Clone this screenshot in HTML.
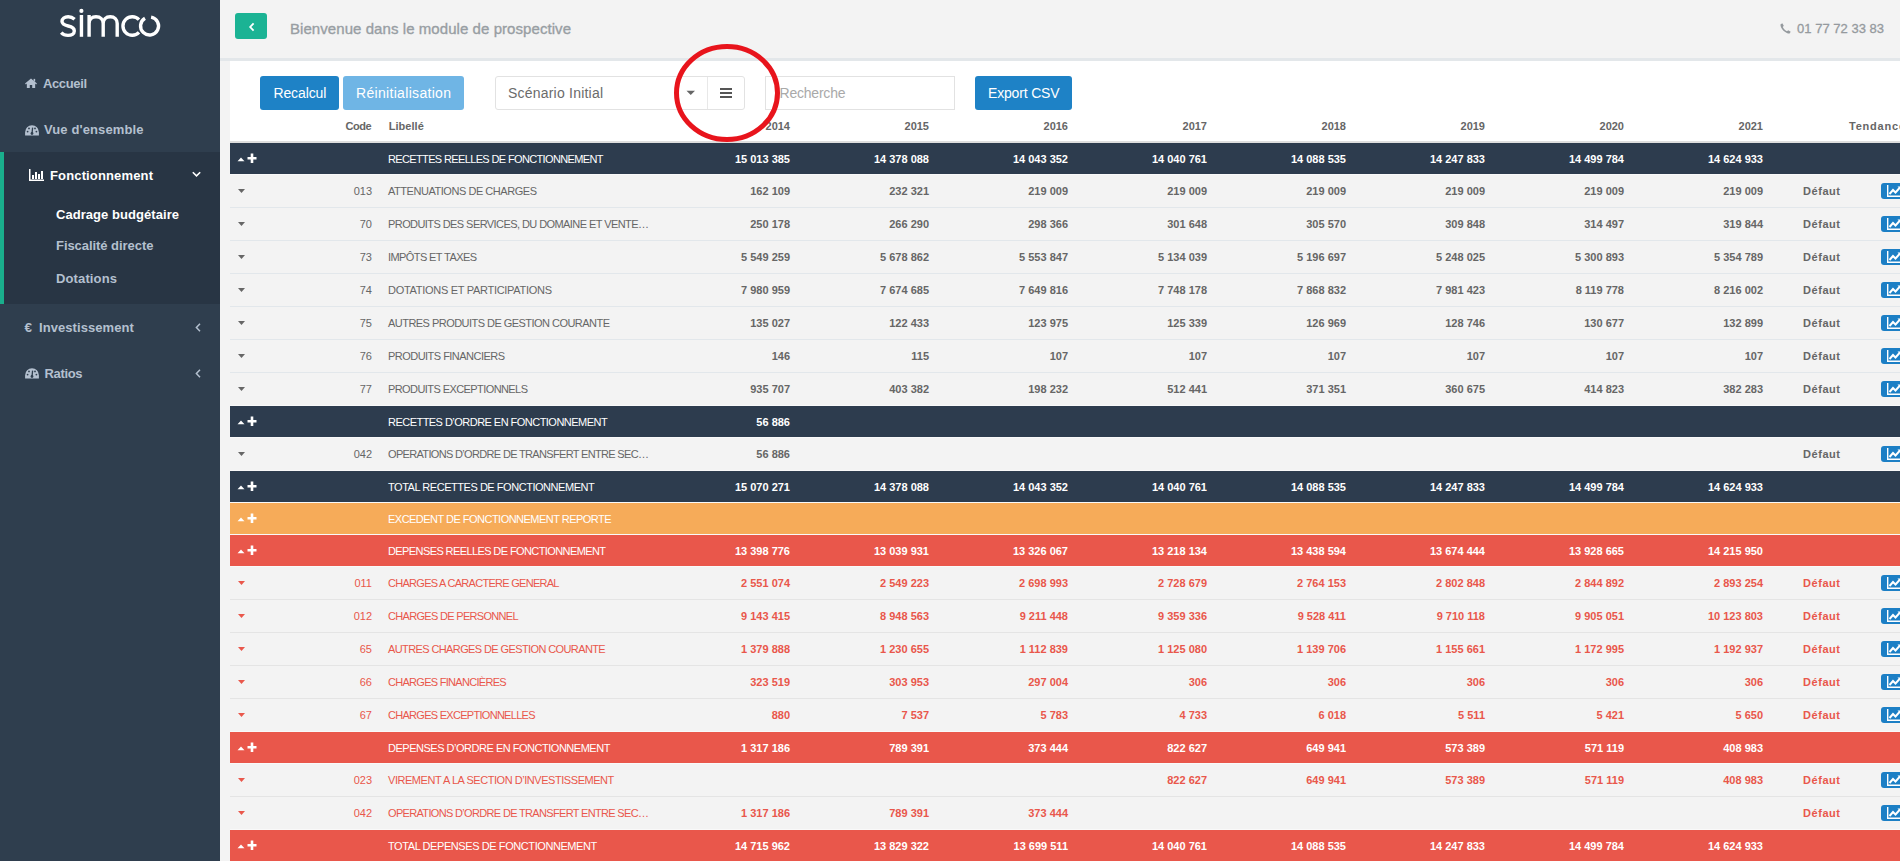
<!DOCTYPE html><html><head><meta charset="utf-8"><style>
*{margin:0;padding:0;box-sizing:border-box}
html,body{width:1900px;height:861px;overflow:hidden;background:#f3f3f3;font-family:"Liberation Sans", sans-serif}
.a{position:absolute}
.t{position:absolute;white-space:pre;line-height:1}
#side{position:absolute;left:0;top:0;width:220px;height:861px;background:#2f3e4e}
#act{position:absolute;left:0;top:152px;width:220px;height:152px;background:#283544}
#actbar{position:absolute;left:0;top:152px;width:4px;height:152px;background:#1aae8c}
.row{position:absolute;left:230px;width:1670px}
.dark{background:#2d3c4e;color:#fff}
.orange{background:#f6ab59;color:#fff}
.red{background:#e9574b;color:#fff}
.light{background:#f3f3f3;color:#666}
.lred{background:#f3f3f3;color:#e9574b}
.num{position:absolute;font-size:11px;font-weight:700;white-space:pre;text-align:right;width:120px}
.lab{position:absolute;left:158px;font-size:11px;white-space:pre}
.cd{position:absolute;font-size:11px;white-space:pre;text-align:right;width:60px;left:82px}
.df{position:absolute;left:1573px;font-size:11px;font-weight:700;white-space:pre}
.cb{position:absolute;left:1651px;width:30px;height:16px;background:#1c7fc5;border-radius:3px}
</style></head><body>
<div class="a" style="left:220px;top:58px;width:1680px;height:3px;background:#e3e7ea"></div>
<div class="a" style="left:230px;top:61px;width:1670px;height:800px;background:#fff"></div>
<div id="side"></div><div id="act"></div><div id="actbar"></div>
<svg class="a" style="left:0;top:0" width="220" height="45" viewBox="0 0 220 45"><g stroke="#fff" stroke-width="3.4" fill="none"><path d="M74.6 19.2 C72.6 17.4 70.6 16.7 68.2 16.7 C64.5 16.7 62 18.7 62 21.3 C62 24.3 65 25.3 68.2 26 C71.5 26.7 74.3 27.8 74.3 31 C74.3 33.8 71.6 35.4 68 35.4 C65.3 35.4 63 34.5 61.2 32.6"/><path d="M81.45 15 L81.45 36.8"/><path d="M89.1 15 L89.1 36.8 M89.1 23.5 C89.1 19 92 16.7 96 16.7 C100.5 16.7 103.2 19.5 103.2 23.5 L103.2 36.8 M103.2 23.5 C103.2 19.5 105.9 16.7 110.2 16.7 C114.6 16.7 117.2 19.5 117.2 23.5 L117.2 36.8"/><path d="M139 19.6 A9.3 9.3 0 1 0 139 32.4"/><path d="M151.1 17.1 A9 9 0 1 1 145 18.2"/></g><circle cx="81.4" cy="10.9" r="2.1" fill="#fff"/></svg>
<span class="t" style="left:43px;top:76.5px;font-size:13px;font-weight:700;letter-spacing:-0.375px;color:#b4c0cf">Accueil</span>
<span class="t" style="left:44px;top:123.3px;font-size:13px;font-weight:700;letter-spacing:0.117px;color:#b4c0cf">Vue d'ensemble</span>
<span class="t" style="left:50px;top:168.9px;font-size:13px;font-weight:700;letter-spacing:0.145px;color:#fff">Fonctionnement</span>
<span class="t" style="left:56px;top:207.7px;font-size:13px;font-weight:700;letter-spacing:0.053px;color:#fff">Cadrage budgétaire</span>
<span class="t" style="left:56px;top:239.3px;font-size:13px;font-weight:700;letter-spacing:-0.055px;color:#b4c0cf">Fiscalité directe</span>
<span class="t" style="left:56px;top:271.6px;font-size:13px;font-weight:700;letter-spacing:0.131px;color:#b4c0cf">Dotations</span>
<span class="t" style="left:39px;top:320.6px;font-size:13px;font-weight:700;letter-spacing:0.066px;color:#b4c0cf">Investissement</span>
<span class="t" style="left:44.5px;top:367.0px;font-size:13px;font-weight:700;letter-spacing:-0.347px;color:#b4c0cf">Ratios</span>
<svg class="a" style="left:25px;top:78px" width="12" height="10.5" viewBox="0 0 13 12" preserveAspectRatio="none"><path d="M6.5 0.5 L0 6.3 L1 7.3 L2 6.4 L2 11.5 L5.2 11.5 L5.2 8 L7.8 8 L7.8 11.5 L11 11.5 L11 6.4 L12 7.3 L13 6.3 Z" fill="#b4c0cf"/><rect x="9.3" y="1" width="1.7" height="3" fill="#b4c0cf"/></svg>
<svg class="a" style="left:24.5px;top:124.5px" width="14" height="11" viewBox="0 0 14 11"><path d="M7 0.3 A6.9 6.9 0 0 0 0.1 7.2 L0.1 10.6 L13.9 10.6 L13.9 7.2 A6.9 6.9 0 0 0 7 0.3 Z" fill="#b4c0cf"/><path d="M7 8.6 L7.6 2.6" stroke="#2f3e4e" stroke-width="1.3"/><circle cx="7" cy="8.5" r="1.4" fill="#2f3e4e"/><circle cx="2.6" cy="6.6" r="0.9" fill="#2f3e4e"/><circle cx="4" cy="3.4" r="0.9" fill="#2f3e4e"/><circle cx="10" cy="3.4" r="0.9" fill="#2f3e4e"/><circle cx="11.4" cy="6.6" r="0.9" fill="#2f3e4e"/></svg>
<svg class="a" style="left:24.5px;top:368px" width="14" height="11" viewBox="0 0 14 11"><path d="M7 0.3 A6.9 6.9 0 0 0 0.1 7.2 L0.1 10.6 L13.9 10.6 L13.9 7.2 A6.9 6.9 0 0 0 7 0.3 Z" fill="#b4c0cf"/><path d="M7 8.6 L7.6 2.6" stroke="#2f3e4e" stroke-width="1.3"/><circle cx="7" cy="8.5" r="1.4" fill="#2f3e4e"/><circle cx="2.6" cy="6.6" r="0.9" fill="#2f3e4e"/><circle cx="4" cy="3.4" r="0.9" fill="#2f3e4e"/><circle cx="10" cy="3.4" r="0.9" fill="#2f3e4e"/><circle cx="11.4" cy="6.6" r="0.9" fill="#2f3e4e"/></svg>
<svg class="a" style="left:29px;top:169px" width="15" height="12" viewBox="0 0 15 12"><path d="M0.75 0 L0.75 11.25 L15 11.25" stroke="#fff" stroke-width="1.5" fill="none"/><rect x="3" y="6" width="2" height="4" fill="#fff"/><rect x="6" y="3" width="2" height="7" fill="#fff"/><rect x="9" y="5" width="2" height="5" fill="#fff"/><rect x="12" y="2" width="2" height="8" fill="#fff"/></svg>
<span class="t" style="left:24.5px;top:321px;font-size:13.5px;font-weight:700;color:#b4c0cf">€</span>
<svg class="a" style="left:192px;top:171px" width="9" height="7" viewBox="0 0 9 7"><path d="M0.8 1.2 L4.5 4.9 L8.2 1.2" stroke="#fff" stroke-width="1.6" fill="none"/></svg>
<svg class="a" style="left:195px;top:323px" width="6" height="9" viewBox="0 0 6 9"><path d="M5 0.8 L1.4 4.5 L5 8.2" stroke="#b4c0cf" stroke-width="1.5" fill="none"/></svg>
<svg class="a" style="left:195px;top:369px" width="6" height="9" viewBox="0 0 6 9"><path d="M5 0.8 L1.4 4.5 L5 8.2" stroke="#b4c0cf" stroke-width="1.5" fill="none"/></svg>
<div class="a" style="left:235px;top:13px;width:32px;height:26px;background:#1bb394;border-radius:3px"></div>
<svg class="a" style="left:247.5px;top:22px" width="8" height="10" viewBox="0 0 8 10"><path d="M5.6 1.3 L2.2 5 L5.6 8.7" stroke="#fff" stroke-width="1.8" fill="none"/></svg>
<span class="t" style="left:290px;top:21.2px;font-size:15px;font-weight:400;letter-spacing:0.065px;-webkit-text-stroke:0.35px #989ea3;color:#989ea3">Bienvenue dans le module de prospective</span>
<span class="t" style="left:1797px;top:21.5px;font-size:13px;font-weight:400;letter-spacing:0.019px;-webkit-text-stroke:0.3px #959a9e;color:#959a9e">01 77 72 33 83</span>
<svg class="a" style="left:1780px;top:23px" width="11" height="11" viewBox="0 0 11 11"><path d="M2.3 0.3 L3.8 2.8 L2.8 4 C3.5 5.6 5.2 7.4 7 8.2 L8.2 7.2 L10.7 8.7 L9.6 10.6 C5.5 10.6 0.4 5.5 0.4 1.4 Z" fill="#959a9e"/></svg>
<div class="a" style="left:260px;top:76px;width:79px;height:34px;background:#1e82c6;border-radius:3px"></div>
<span class="t" style="left:273.4px;top:86.1px;font-size:14px;font-weight:400;letter-spacing:-0.100px;color:#fff">Recalcul</span>
<div class="a" style="left:343px;top:76px;width:121px;height:34px;background:#6fb5e5;border-radius:3px"></div>
<span class="t" style="left:356px;top:86.1px;font-size:14px;font-weight:400;letter-spacing:0.315px;color:#fff">Réinitialisation</span>
<div class="a" style="left:495px;top:76px;width:250px;height:34px;border:1px solid #e2e2e2;border-radius:3px;background:#fff"></div>
<div class="a" style="left:707px;top:77px;width:1px;height:32px;background:#e8e8e8"></div>
<span class="t" style="left:508px;top:85.8px;font-size:14px;font-weight:400;letter-spacing:0.211px;color:#6b6b6b">Scénario Initial</span>
<svg class="a" style="left:686px;top:90px" width="10" height="6" viewBox="0 0 10 6"><path d="M0.5 0.8 L9 0.8 L4.75 5 Z" fill="#666"/></svg>
<div class="a" style="left:720px;top:88px;width:12px;height:2px;background:#555"></div>
<div class="a" style="left:720px;top:92px;width:12px;height:2px;background:#555"></div>
<div class="a" style="left:720px;top:96px;width:12px;height:2px;background:#555"></div>
<div class="a" style="left:765px;top:76px;width:190px;height:34px;border:1px solid #e2e2e2;background:#fff"></div>
<span class="t" style="left:779.5px;top:85.8px;font-size:14px;font-weight:400;letter-spacing:-0.213px;color:#a9a9a9">Recherche</span>
<div class="a" style="left:975px;top:76px;width:97px;height:34px;background:#1e82c6;border-radius:3px"></div>
<span class="t" style="left:988px;top:86.1px;font-size:14px;font-weight:400;letter-spacing:-0.171px;color:#fff">Export CSV</span>
<span class="t" style="left:345.4px;top:120.7px;font-size:11px;font-weight:700;letter-spacing:-0.400px;color:#666">Code</span>
<span class="t" style="left:388.8px;top:120.7px;font-size:11px;font-weight:700;letter-spacing:0.026px;color:#666">Libellé</span>
<span class="t" style="left:670px;width:120px;text-align:right;top:120.7px;font-size:11px;font-weight:700;color:#666">2014</span>
<span class="t" style="left:809px;width:120px;text-align:right;top:120.7px;font-size:11px;font-weight:700;color:#666">2015</span>
<span class="t" style="left:948px;width:120px;text-align:right;top:120.7px;font-size:11px;font-weight:700;color:#666">2016</span>
<span class="t" style="left:1087px;width:120px;text-align:right;top:120.7px;font-size:11px;font-weight:700;color:#666">2017</span>
<span class="t" style="left:1226px;width:120px;text-align:right;top:120.7px;font-size:11px;font-weight:700;color:#666">2018</span>
<span class="t" style="left:1365px;width:120px;text-align:right;top:120.7px;font-size:11px;font-weight:700;color:#666">2019</span>
<span class="t" style="left:1504px;width:120px;text-align:right;top:120.7px;font-size:11px;font-weight:700;color:#666">2020</span>
<span class="t" style="left:1643px;width:120px;text-align:right;top:120.7px;font-size:11px;font-weight:700;color:#666">2021</span>
<span class="t" style="left:1849px;top:120.7px;font-size:11px;font-weight:700;letter-spacing:0.781px;color:#666">Tendance</span>
<div class="a" style="left:230px;top:141px;width:1670px;height:2px;background:#dedede"></div>
<div class="row dark" style="top:143px;height:31px;line-height:31px">
<svg class="a" style="left:7px;top:10.0px" width="20" height="11" viewBox="0 0 20 11"><path d="M0.5 8.3 L7.5 8.3 L4 4.4 Z" fill="#fff"/><path d="M15 0.5 L15 10 M10.5 5.25 L19.5 5.25" stroke="#fff" stroke-width="2.6"/></svg>
<span class="lab" style="top:0.5px;letter-spacing:-0.638px">RECETTES REELLES DE FONCTIONNEMENT</span>
<span class="num" style="left:440px;top:0.5px">15 013 385</span>
<span class="num" style="left:579px;top:0.5px">14 378 088</span>
<span class="num" style="left:718px;top:0.5px">14 043 352</span>
<span class="num" style="left:857px;top:0.5px">14 040 761</span>
<span class="num" style="left:996px;top:0.5px">14 088 535</span>
<span class="num" style="left:1135px;top:0.5px">14 247 833</span>
<span class="num" style="left:1274px;top:0.5px">14 499 784</span>
<span class="num" style="left:1413px;top:0.5px">14 624 933</span>
</div>
<div class="a" style="left:230px;top:174px;width:1670px;height:1px;background:#f9f9f9"></div>
<div class="row light" style="top:175px;height:32px;line-height:32px">
<svg class="a" style="left:7.5px;top:14.0px" width="7" height="4" viewBox="0 0 7 4"><path d="M0 0 L7 0 L3.5 4 Z" fill="#666"/></svg>
<span class="cd" style="top:0px">013</span>
<span class="lab" style="top:0px;letter-spacing:-0.460px">ATTENUATIONS DE CHARGES</span>
<span class="num" style="left:440px;top:0px">162 109</span>
<span class="num" style="left:579px;top:0px">232 321</span>
<span class="num" style="left:718px;top:0px">219 009</span>
<span class="num" style="left:857px;top:0px">219 009</span>
<span class="num" style="left:996px;top:0px">219 009</span>
<span class="num" style="left:1135px;top:0px">219 009</span>
<span class="num" style="left:1274px;top:0px">219 009</span>
<span class="num" style="left:1413px;top:0px">219 009</span>
<span class="df" style="letter-spacing:0.553px">Défaut</span>
<div class="cb" style="top:8px"><svg class="a" style="left:6px;top:2px" width="16" height="12" viewBox="0 0 16 12"><path d="M0.7 0 L0.7 11.3 L16 11.3" stroke="#fff" stroke-width="1.4" fill="none"/><path d="M2.5 9 L6 5 L8.5 7.5 L13 2.5" stroke="#fff" stroke-width="2" fill="none"/><path d="M10.5 1.5 L14.5 1.5 L14.5 5.5 Z" fill="#fff"/></svg></div>
</div>
<div class="a" style="left:230px;top:207px;width:1670px;height:1px;background:#e2e7eb"></div>
<div class="row light" style="top:208px;height:32px;line-height:32px">
<svg class="a" style="left:7.5px;top:14.0px" width="7" height="4" viewBox="0 0 7 4"><path d="M0 0 L7 0 L3.5 4 Z" fill="#666"/></svg>
<span class="cd" style="top:0px">70</span>
<span class="lab" style="top:0px;letter-spacing:-0.573px">PRODUITS DES SERVICES, DU DOMAINE ET VENTE…</span>
<span class="num" style="left:440px;top:0px">250 178</span>
<span class="num" style="left:579px;top:0px">266 290</span>
<span class="num" style="left:718px;top:0px">298 366</span>
<span class="num" style="left:857px;top:0px">301 648</span>
<span class="num" style="left:996px;top:0px">305 570</span>
<span class="num" style="left:1135px;top:0px">309 848</span>
<span class="num" style="left:1274px;top:0px">314 497</span>
<span class="num" style="left:1413px;top:0px">319 844</span>
<span class="df" style="letter-spacing:0.553px">Défaut</span>
<div class="cb" style="top:8px"><svg class="a" style="left:6px;top:2px" width="16" height="12" viewBox="0 0 16 12"><path d="M0.7 0 L0.7 11.3 L16 11.3" stroke="#fff" stroke-width="1.4" fill="none"/><path d="M2.5 9 L6 5 L8.5 7.5 L13 2.5" stroke="#fff" stroke-width="2" fill="none"/><path d="M10.5 1.5 L14.5 1.5 L14.5 5.5 Z" fill="#fff"/></svg></div>
</div>
<div class="a" style="left:230px;top:240px;width:1670px;height:1px;background:#e2e7eb"></div>
<div class="row light" style="top:241px;height:32px;line-height:32px">
<svg class="a" style="left:7.5px;top:14.0px" width="7" height="4" viewBox="0 0 7 4"><path d="M0 0 L7 0 L3.5 4 Z" fill="#666"/></svg>
<span class="cd" style="top:0px">73</span>
<span class="lab" style="top:0px;letter-spacing:-0.586px">IMPÔTS ET TAXES</span>
<span class="num" style="left:440px;top:0px">5 549 259</span>
<span class="num" style="left:579px;top:0px">5 678 862</span>
<span class="num" style="left:718px;top:0px">5 553 847</span>
<span class="num" style="left:857px;top:0px">5 134 039</span>
<span class="num" style="left:996px;top:0px">5 196 697</span>
<span class="num" style="left:1135px;top:0px">5 248 025</span>
<span class="num" style="left:1274px;top:0px">5 300 893</span>
<span class="num" style="left:1413px;top:0px">5 354 789</span>
<span class="df" style="letter-spacing:0.553px">Défaut</span>
<div class="cb" style="top:8px"><svg class="a" style="left:6px;top:2px" width="16" height="12" viewBox="0 0 16 12"><path d="M0.7 0 L0.7 11.3 L16 11.3" stroke="#fff" stroke-width="1.4" fill="none"/><path d="M2.5 9 L6 5 L8.5 7.5 L13 2.5" stroke="#fff" stroke-width="2" fill="none"/><path d="M10.5 1.5 L14.5 1.5 L14.5 5.5 Z" fill="#fff"/></svg></div>
</div>
<div class="a" style="left:230px;top:273px;width:1670px;height:1px;background:#e2e7eb"></div>
<div class="row light" style="top:274px;height:32px;line-height:32px">
<svg class="a" style="left:7.5px;top:14.0px" width="7" height="4" viewBox="0 0 7 4"><path d="M0 0 L7 0 L3.5 4 Z" fill="#666"/></svg>
<span class="cd" style="top:0px">74</span>
<span class="lab" style="top:0px;letter-spacing:-0.290px">DOTATIONS ET PARTICIPATIONS</span>
<span class="num" style="left:440px;top:0px">7 980 959</span>
<span class="num" style="left:579px;top:0px">7 674 685</span>
<span class="num" style="left:718px;top:0px">7 649 816</span>
<span class="num" style="left:857px;top:0px">7 748 178</span>
<span class="num" style="left:996px;top:0px">7 868 832</span>
<span class="num" style="left:1135px;top:0px">7 981 423</span>
<span class="num" style="left:1274px;top:0px">8 119 778</span>
<span class="num" style="left:1413px;top:0px">8 216 002</span>
<span class="df" style="letter-spacing:0.553px">Défaut</span>
<div class="cb" style="top:8px"><svg class="a" style="left:6px;top:2px" width="16" height="12" viewBox="0 0 16 12"><path d="M0.7 0 L0.7 11.3 L16 11.3" stroke="#fff" stroke-width="1.4" fill="none"/><path d="M2.5 9 L6 5 L8.5 7.5 L13 2.5" stroke="#fff" stroke-width="2" fill="none"/><path d="M10.5 1.5 L14.5 1.5 L14.5 5.5 Z" fill="#fff"/></svg></div>
</div>
<div class="a" style="left:230px;top:306px;width:1670px;height:1px;background:#e2e7eb"></div>
<div class="row light" style="top:307px;height:32px;line-height:32px">
<svg class="a" style="left:7.5px;top:14.0px" width="7" height="4" viewBox="0 0 7 4"><path d="M0 0 L7 0 L3.5 4 Z" fill="#666"/></svg>
<span class="cd" style="top:0px">75</span>
<span class="lab" style="top:0px;letter-spacing:-0.535px">AUTRES PRODUITS DE GESTION COURANTE</span>
<span class="num" style="left:440px;top:0px">135 027</span>
<span class="num" style="left:579px;top:0px">122 433</span>
<span class="num" style="left:718px;top:0px">123 975</span>
<span class="num" style="left:857px;top:0px">125 339</span>
<span class="num" style="left:996px;top:0px">126 969</span>
<span class="num" style="left:1135px;top:0px">128 746</span>
<span class="num" style="left:1274px;top:0px">130 677</span>
<span class="num" style="left:1413px;top:0px">132 899</span>
<span class="df" style="letter-spacing:0.553px">Défaut</span>
<div class="cb" style="top:8px"><svg class="a" style="left:6px;top:2px" width="16" height="12" viewBox="0 0 16 12"><path d="M0.7 0 L0.7 11.3 L16 11.3" stroke="#fff" stroke-width="1.4" fill="none"/><path d="M2.5 9 L6 5 L8.5 7.5 L13 2.5" stroke="#fff" stroke-width="2" fill="none"/><path d="M10.5 1.5 L14.5 1.5 L14.5 5.5 Z" fill="#fff"/></svg></div>
</div>
<div class="a" style="left:230px;top:339px;width:1670px;height:1px;background:#e2e7eb"></div>
<div class="row light" style="top:340px;height:32px;line-height:32px">
<svg class="a" style="left:7.5px;top:14.0px" width="7" height="4" viewBox="0 0 7 4"><path d="M0 0 L7 0 L3.5 4 Z" fill="#666"/></svg>
<span class="cd" style="top:0px">76</span>
<span class="lab" style="top:0px;letter-spacing:-0.529px">PRODUITS FINANCIERS</span>
<span class="num" style="left:440px;top:0px">146</span>
<span class="num" style="left:579px;top:0px">115</span>
<span class="num" style="left:718px;top:0px">107</span>
<span class="num" style="left:857px;top:0px">107</span>
<span class="num" style="left:996px;top:0px">107</span>
<span class="num" style="left:1135px;top:0px">107</span>
<span class="num" style="left:1274px;top:0px">107</span>
<span class="num" style="left:1413px;top:0px">107</span>
<span class="df" style="letter-spacing:0.553px">Défaut</span>
<div class="cb" style="top:8px"><svg class="a" style="left:6px;top:2px" width="16" height="12" viewBox="0 0 16 12"><path d="M0.7 0 L0.7 11.3 L16 11.3" stroke="#fff" stroke-width="1.4" fill="none"/><path d="M2.5 9 L6 5 L8.5 7.5 L13 2.5" stroke="#fff" stroke-width="2" fill="none"/><path d="M10.5 1.5 L14.5 1.5 L14.5 5.5 Z" fill="#fff"/></svg></div>
</div>
<div class="a" style="left:230px;top:372px;width:1670px;height:1px;background:#e2e7eb"></div>
<div class="row light" style="top:373px;height:32px;line-height:32px">
<svg class="a" style="left:7.5px;top:14.0px" width="7" height="4" viewBox="0 0 7 4"><path d="M0 0 L7 0 L3.5 4 Z" fill="#666"/></svg>
<span class="cd" style="top:0px">77</span>
<span class="lab" style="top:0px;letter-spacing:-0.581px">PRODUITS EXCEPTIONNELS</span>
<span class="num" style="left:440px;top:0px">935 707</span>
<span class="num" style="left:579px;top:0px">403 382</span>
<span class="num" style="left:718px;top:0px">198 232</span>
<span class="num" style="left:857px;top:0px">512 441</span>
<span class="num" style="left:996px;top:0px">371 351</span>
<span class="num" style="left:1135px;top:0px">360 675</span>
<span class="num" style="left:1274px;top:0px">414 823</span>
<span class="num" style="left:1413px;top:0px">382 283</span>
<span class="df" style="letter-spacing:0.553px">Défaut</span>
<div class="cb" style="top:8px"><svg class="a" style="left:6px;top:2px" width="16" height="12" viewBox="0 0 16 12"><path d="M0.7 0 L0.7 11.3 L16 11.3" stroke="#fff" stroke-width="1.4" fill="none"/><path d="M2.5 9 L6 5 L8.5 7.5 L13 2.5" stroke="#fff" stroke-width="2" fill="none"/><path d="M10.5 1.5 L14.5 1.5 L14.5 5.5 Z" fill="#fff"/></svg></div>
</div>
<div class="a" style="left:230px;top:405px;width:1670px;height:1px;background:#f9f9f9"></div>
<div class="row dark" style="top:406px;height:31px;line-height:31px">
<svg class="a" style="left:7px;top:10.0px" width="20" height="11" viewBox="0 0 20 11"><path d="M0.5 8.3 L7.5 8.3 L4 4.4 Z" fill="#fff"/><path d="M15 0.5 L15 10 M10.5 5.25 L19.5 5.25" stroke="#fff" stroke-width="2.6"/></svg>
<span class="lab" style="top:0.5px;letter-spacing:-0.531px">RECETTES D’ORDRE EN FONCTIONNEMENT</span>
<span class="num" style="left:440px;top:0.5px">56 886</span>
</div>
<div class="a" style="left:230px;top:437px;width:1670px;height:1px;background:#f9f9f9"></div>
<div class="row light" style="top:438px;height:32px;line-height:32px">
<svg class="a" style="left:7.5px;top:14.0px" width="7" height="4" viewBox="0 0 7 4"><path d="M0 0 L7 0 L3.5 4 Z" fill="#666"/></svg>
<span class="cd" style="top:0px">042</span>
<span class="lab" style="top:0px;letter-spacing:-0.666px">OPERATIONS D’ORDRE DE TRANSFERT ENTRE SEC…</span>
<span class="num" style="left:440px;top:0px">56 886</span>
<span class="df" style="letter-spacing:0.553px">Défaut</span>
<div class="cb" style="top:8px"><svg class="a" style="left:6px;top:2px" width="16" height="12" viewBox="0 0 16 12"><path d="M0.7 0 L0.7 11.3 L16 11.3" stroke="#fff" stroke-width="1.4" fill="none"/><path d="M2.5 9 L6 5 L8.5 7.5 L13 2.5" stroke="#fff" stroke-width="2" fill="none"/><path d="M10.5 1.5 L14.5 1.5 L14.5 5.5 Z" fill="#fff"/></svg></div>
</div>
<div class="a" style="left:230px;top:470px;width:1670px;height:1px;background:#f9f9f9"></div>
<div class="row dark" style="top:471px;height:31px;line-height:31px">
<svg class="a" style="left:7px;top:10.0px" width="20" height="11" viewBox="0 0 20 11"><path d="M0.5 8.3 L7.5 8.3 L4 4.4 Z" fill="#fff"/><path d="M15 0.5 L15 10 M10.5 5.25 L19.5 5.25" stroke="#fff" stroke-width="2.6"/></svg>
<span class="lab" style="top:0.5px;letter-spacing:-0.462px">TOTAL RECETTES DE FONCTIONNEMENT</span>
<span class="num" style="left:440px;top:0.5px">15 070 271</span>
<span class="num" style="left:579px;top:0.5px">14 378 088</span>
<span class="num" style="left:718px;top:0.5px">14 043 352</span>
<span class="num" style="left:857px;top:0.5px">14 040 761</span>
<span class="num" style="left:996px;top:0.5px">14 088 535</span>
<span class="num" style="left:1135px;top:0.5px">14 247 833</span>
<span class="num" style="left:1274px;top:0.5px">14 499 784</span>
<span class="num" style="left:1413px;top:0.5px">14 624 933</span>
</div>
<div class="a" style="left:230px;top:502px;width:1670px;height:1px;background:#f9f9f9"></div>
<div class="row orange" style="top:503px;height:31px;line-height:31px">
<svg class="a" style="left:7px;top:10.0px" width="20" height="11" viewBox="0 0 20 11"><path d="M0.5 8.3 L7.5 8.3 L4 4.4 Z" fill="#fff"/><path d="M15 0.5 L15 10 M10.5 5.25 L19.5 5.25" stroke="#fff" stroke-width="2.6"/></svg>
<span class="lab" style="top:0.5px;letter-spacing:-0.522px">EXCEDENT DE FONCTIONNEMENT REPORTE</span>
</div>
<div class="a" style="left:230px;top:534px;width:1670px;height:1px;background:#f9f9f9"></div>
<div class="row red" style="top:535px;height:31px;line-height:31px">
<svg class="a" style="left:7px;top:10.0px" width="20" height="11" viewBox="0 0 20 11"><path d="M0.5 8.3 L7.5 8.3 L4 4.4 Z" fill="#fff"/><path d="M15 0.5 L15 10 M10.5 5.25 L19.5 5.25" stroke="#fff" stroke-width="2.6"/></svg>
<span class="lab" style="top:0.5px;letter-spacing:-0.599px">DEPENSES REELLES DE FONCTIONNEMENT</span>
<span class="num" style="left:440px;top:0.5px">13 398 776</span>
<span class="num" style="left:579px;top:0.5px">13 039 931</span>
<span class="num" style="left:718px;top:0.5px">13 326 067</span>
<span class="num" style="left:857px;top:0.5px">13 218 134</span>
<span class="num" style="left:996px;top:0.5px">13 438 594</span>
<span class="num" style="left:1135px;top:0.5px">13 674 444</span>
<span class="num" style="left:1274px;top:0.5px">13 928 665</span>
<span class="num" style="left:1413px;top:0.5px">14 215 950</span>
</div>
<div class="a" style="left:230px;top:566px;width:1670px;height:1px;background:#f9f9f9"></div>
<div class="row lred" style="top:567px;height:32px;line-height:32px">
<svg class="a" style="left:7.5px;top:14.0px" width="7" height="4" viewBox="0 0 7 4"><path d="M0 0 L7 0 L3.5 4 Z" fill="#e9574b"/></svg>
<span class="cd" style="top:0px">011</span>
<span class="lab" style="top:0px;letter-spacing:-0.716px">CHARGES A CARACTERE GENERAL</span>
<span class="num" style="left:440px;top:0px">2 551 074</span>
<span class="num" style="left:579px;top:0px">2 549 223</span>
<span class="num" style="left:718px;top:0px">2 698 993</span>
<span class="num" style="left:857px;top:0px">2 728 679</span>
<span class="num" style="left:996px;top:0px">2 764 153</span>
<span class="num" style="left:1135px;top:0px">2 802 848</span>
<span class="num" style="left:1274px;top:0px">2 844 892</span>
<span class="num" style="left:1413px;top:0px">2 893 254</span>
<span class="df" style="letter-spacing:0.553px">Défaut</span>
<div class="cb" style="top:8px"><svg class="a" style="left:6px;top:2px" width="16" height="12" viewBox="0 0 16 12"><path d="M0.7 0 L0.7 11.3 L16 11.3" stroke="#fff" stroke-width="1.4" fill="none"/><path d="M2.5 9 L6 5 L8.5 7.5 L13 2.5" stroke="#fff" stroke-width="2" fill="none"/><path d="M10.5 1.5 L14.5 1.5 L14.5 5.5 Z" fill="#fff"/></svg></div>
</div>
<div class="a" style="left:230px;top:599px;width:1670px;height:1px;background:#e4e4e4"></div>
<div class="row lred" style="top:600px;height:32px;line-height:32px">
<svg class="a" style="left:7.5px;top:14.0px" width="7" height="4" viewBox="0 0 7 4"><path d="M0 0 L7 0 L3.5 4 Z" fill="#e9574b"/></svg>
<span class="cd" style="top:0px">012</span>
<span class="lab" style="top:0px;letter-spacing:-0.687px">CHARGES DE PERSONNEL</span>
<span class="num" style="left:440px;top:0px">9 143 415</span>
<span class="num" style="left:579px;top:0px">8 948 563</span>
<span class="num" style="left:718px;top:0px">9 211 448</span>
<span class="num" style="left:857px;top:0px">9 359 336</span>
<span class="num" style="left:996px;top:0px">9 528 411</span>
<span class="num" style="left:1135px;top:0px">9 710 118</span>
<span class="num" style="left:1274px;top:0px">9 905 051</span>
<span class="num" style="left:1413px;top:0px">10 123 803</span>
<span class="df" style="letter-spacing:0.553px">Défaut</span>
<div class="cb" style="top:8px"><svg class="a" style="left:6px;top:2px" width="16" height="12" viewBox="0 0 16 12"><path d="M0.7 0 L0.7 11.3 L16 11.3" stroke="#fff" stroke-width="1.4" fill="none"/><path d="M2.5 9 L6 5 L8.5 7.5 L13 2.5" stroke="#fff" stroke-width="2" fill="none"/><path d="M10.5 1.5 L14.5 1.5 L14.5 5.5 Z" fill="#fff"/></svg></div>
</div>
<div class="a" style="left:230px;top:632px;width:1670px;height:1px;background:#e4e4e4"></div>
<div class="row lred" style="top:633px;height:32px;line-height:32px">
<svg class="a" style="left:7.5px;top:14.0px" width="7" height="4" viewBox="0 0 7 4"><path d="M0 0 L7 0 L3.5 4 Z" fill="#e9574b"/></svg>
<span class="cd" style="top:0px">65</span>
<span class="lab" style="top:0px;letter-spacing:-0.608px">AUTRES CHARGES DE GESTION COURANTE</span>
<span class="num" style="left:440px;top:0px">1 379 888</span>
<span class="num" style="left:579px;top:0px">1 230 655</span>
<span class="num" style="left:718px;top:0px">1 112 839</span>
<span class="num" style="left:857px;top:0px">1 125 080</span>
<span class="num" style="left:996px;top:0px">1 139 706</span>
<span class="num" style="left:1135px;top:0px">1 155 661</span>
<span class="num" style="left:1274px;top:0px">1 172 995</span>
<span class="num" style="left:1413px;top:0px">1 192 937</span>
<span class="df" style="letter-spacing:0.553px">Défaut</span>
<div class="cb" style="top:8px"><svg class="a" style="left:6px;top:2px" width="16" height="12" viewBox="0 0 16 12"><path d="M0.7 0 L0.7 11.3 L16 11.3" stroke="#fff" stroke-width="1.4" fill="none"/><path d="M2.5 9 L6 5 L8.5 7.5 L13 2.5" stroke="#fff" stroke-width="2" fill="none"/><path d="M10.5 1.5 L14.5 1.5 L14.5 5.5 Z" fill="#fff"/></svg></div>
</div>
<div class="a" style="left:230px;top:665px;width:1670px;height:1px;background:#e4e4e4"></div>
<div class="row lred" style="top:666px;height:32px;line-height:32px">
<svg class="a" style="left:7.5px;top:14.0px" width="7" height="4" viewBox="0 0 7 4"><path d="M0 0 L7 0 L3.5 4 Z" fill="#e9574b"/></svg>
<span class="cd" style="top:0px">66</span>
<span class="lab" style="top:0px;letter-spacing:-0.712px">CHARGES FINANCIÈRES</span>
<span class="num" style="left:440px;top:0px">323 519</span>
<span class="num" style="left:579px;top:0px">303 953</span>
<span class="num" style="left:718px;top:0px">297 004</span>
<span class="num" style="left:857px;top:0px">306</span>
<span class="num" style="left:996px;top:0px">306</span>
<span class="num" style="left:1135px;top:0px">306</span>
<span class="num" style="left:1274px;top:0px">306</span>
<span class="num" style="left:1413px;top:0px">306</span>
<span class="df" style="letter-spacing:0.553px">Défaut</span>
<div class="cb" style="top:8px"><svg class="a" style="left:6px;top:2px" width="16" height="12" viewBox="0 0 16 12"><path d="M0.7 0 L0.7 11.3 L16 11.3" stroke="#fff" stroke-width="1.4" fill="none"/><path d="M2.5 9 L6 5 L8.5 7.5 L13 2.5" stroke="#fff" stroke-width="2" fill="none"/><path d="M10.5 1.5 L14.5 1.5 L14.5 5.5 Z" fill="#fff"/></svg></div>
</div>
<div class="a" style="left:230px;top:698px;width:1670px;height:1px;background:#e4e4e4"></div>
<div class="row lred" style="top:699px;height:32px;line-height:32px">
<svg class="a" style="left:7.5px;top:14.0px" width="7" height="4" viewBox="0 0 7 4"><path d="M0 0 L7 0 L3.5 4 Z" fill="#e9574b"/></svg>
<span class="cd" style="top:0px">67</span>
<span class="lab" style="top:0px;letter-spacing:-0.714px">CHARGES EXCEPTIONNELLES</span>
<span class="num" style="left:440px;top:0px">880</span>
<span class="num" style="left:579px;top:0px">7 537</span>
<span class="num" style="left:718px;top:0px">5 783</span>
<span class="num" style="left:857px;top:0px">4 733</span>
<span class="num" style="left:996px;top:0px">6 018</span>
<span class="num" style="left:1135px;top:0px">5 511</span>
<span class="num" style="left:1274px;top:0px">5 421</span>
<span class="num" style="left:1413px;top:0px">5 650</span>
<span class="df" style="letter-spacing:0.553px">Défaut</span>
<div class="cb" style="top:8px"><svg class="a" style="left:6px;top:2px" width="16" height="12" viewBox="0 0 16 12"><path d="M0.7 0 L0.7 11.3 L16 11.3" stroke="#fff" stroke-width="1.4" fill="none"/><path d="M2.5 9 L6 5 L8.5 7.5 L13 2.5" stroke="#fff" stroke-width="2" fill="none"/><path d="M10.5 1.5 L14.5 1.5 L14.5 5.5 Z" fill="#fff"/></svg></div>
</div>
<div class="a" style="left:230px;top:731px;width:1670px;height:1px;background:#f9f9f9"></div>
<div class="row red" style="top:732px;height:31px;line-height:31px">
<svg class="a" style="left:7px;top:10.0px" width="20" height="11" viewBox="0 0 20 11"><path d="M0.5 8.3 L7.5 8.3 L4 4.4 Z" fill="#fff"/><path d="M15 0.5 L15 10 M10.5 5.25 L19.5 5.25" stroke="#fff" stroke-width="2.6"/></svg>
<span class="lab" style="top:0.5px;letter-spacing:-0.484px">DEPENSES D’ORDRE EN FONCTIONNEMENT</span>
<span class="num" style="left:440px;top:0.5px">1 317 186</span>
<span class="num" style="left:579px;top:0.5px">789 391</span>
<span class="num" style="left:718px;top:0.5px">373 444</span>
<span class="num" style="left:857px;top:0.5px">822 627</span>
<span class="num" style="left:996px;top:0.5px">649 941</span>
<span class="num" style="left:1135px;top:0.5px">573 389</span>
<span class="num" style="left:1274px;top:0.5px">571 119</span>
<span class="num" style="left:1413px;top:0.5px">408 983</span>
</div>
<div class="a" style="left:230px;top:763px;width:1670px;height:1px;background:#f9f9f9"></div>
<div class="row lred" style="top:764px;height:32px;line-height:32px">
<svg class="a" style="left:7.5px;top:14.0px" width="7" height="4" viewBox="0 0 7 4"><path d="M0 0 L7 0 L3.5 4 Z" fill="#e9574b"/></svg>
<span class="cd" style="top:0px">023</span>
<span class="lab" style="top:0px;letter-spacing:-0.453px">VIREMENT A LA SECTION D’INVESTISSEMENT</span>
<span class="num" style="left:857px;top:0px">822 627</span>
<span class="num" style="left:996px;top:0px">649 941</span>
<span class="num" style="left:1135px;top:0px">573 389</span>
<span class="num" style="left:1274px;top:0px">571 119</span>
<span class="num" style="left:1413px;top:0px">408 983</span>
<span class="df" style="letter-spacing:0.553px">Défaut</span>
<div class="cb" style="top:8px"><svg class="a" style="left:6px;top:2px" width="16" height="12" viewBox="0 0 16 12"><path d="M0.7 0 L0.7 11.3 L16 11.3" stroke="#fff" stroke-width="1.4" fill="none"/><path d="M2.5 9 L6 5 L8.5 7.5 L13 2.5" stroke="#fff" stroke-width="2" fill="none"/><path d="M10.5 1.5 L14.5 1.5 L14.5 5.5 Z" fill="#fff"/></svg></div>
</div>
<div class="a" style="left:230px;top:796px;width:1670px;height:1px;background:#e4e4e4"></div>
<div class="row lred" style="top:797px;height:32px;line-height:32px">
<svg class="a" style="left:7.5px;top:14.0px" width="7" height="4" viewBox="0 0 7 4"><path d="M0 0 L7 0 L3.5 4 Z" fill="#e9574b"/></svg>
<span class="cd" style="top:0px">042</span>
<span class="lab" style="top:0px;letter-spacing:-0.666px">OPERATIONS D’ORDRE DE TRANSFERT ENTRE SEC…</span>
<span class="num" style="left:440px;top:0px">1 317 186</span>
<span class="num" style="left:579px;top:0px">789 391</span>
<span class="num" style="left:718px;top:0px">373 444</span>
<span class="df" style="letter-spacing:0.553px">Défaut</span>
<div class="cb" style="top:8px"><svg class="a" style="left:6px;top:2px" width="16" height="12" viewBox="0 0 16 12"><path d="M0.7 0 L0.7 11.3 L16 11.3" stroke="#fff" stroke-width="1.4" fill="none"/><path d="M2.5 9 L6 5 L8.5 7.5 L13 2.5" stroke="#fff" stroke-width="2" fill="none"/><path d="M10.5 1.5 L14.5 1.5 L14.5 5.5 Z" fill="#fff"/></svg></div>
</div>
<div class="a" style="left:230px;top:829px;width:1670px;height:1px;background:#f9f9f9"></div>
<div class="row red" style="top:830px;height:31px;line-height:31px">
<svg class="a" style="left:7px;top:10.0px" width="20" height="11" viewBox="0 0 20 11"><path d="M0.5 8.3 L7.5 8.3 L4 4.4 Z" fill="#fff"/><path d="M15 0.5 L15 10 M10.5 5.25 L19.5 5.25" stroke="#fff" stroke-width="2.6"/></svg>
<span class="lab" style="top:0.5px;letter-spacing:-0.419px">TOTAL DEPENSES DE FONCTIONNEMENT</span>
<span class="num" style="left:440px;top:0.5px">14 715 962</span>
<span class="num" style="left:579px;top:0.5px">13 829 322</span>
<span class="num" style="left:718px;top:0.5px">13 699 511</span>
<span class="num" style="left:857px;top:0.5px">14 040 761</span>
<span class="num" style="left:996px;top:0.5px">14 088 535</span>
<span class="num" style="left:1135px;top:0.5px">14 247 833</span>
<span class="num" style="left:1274px;top:0.5px">14 499 784</span>
<span class="num" style="left:1413px;top:0.5px">14 624 933</span>
</div>
<div class="a" style="left:230px;top:861px;width:1670px;height:1px;background:#f9f9f9"></div>
<svg class="a" style="left:670px;top:40px" width="115" height="106" viewBox="0 0 115 106"><ellipse cx="57" cy="53" rx="50.5" ry="46.5" stroke="#e8141c" stroke-width="5" fill="none"/></svg>
</body></html>
